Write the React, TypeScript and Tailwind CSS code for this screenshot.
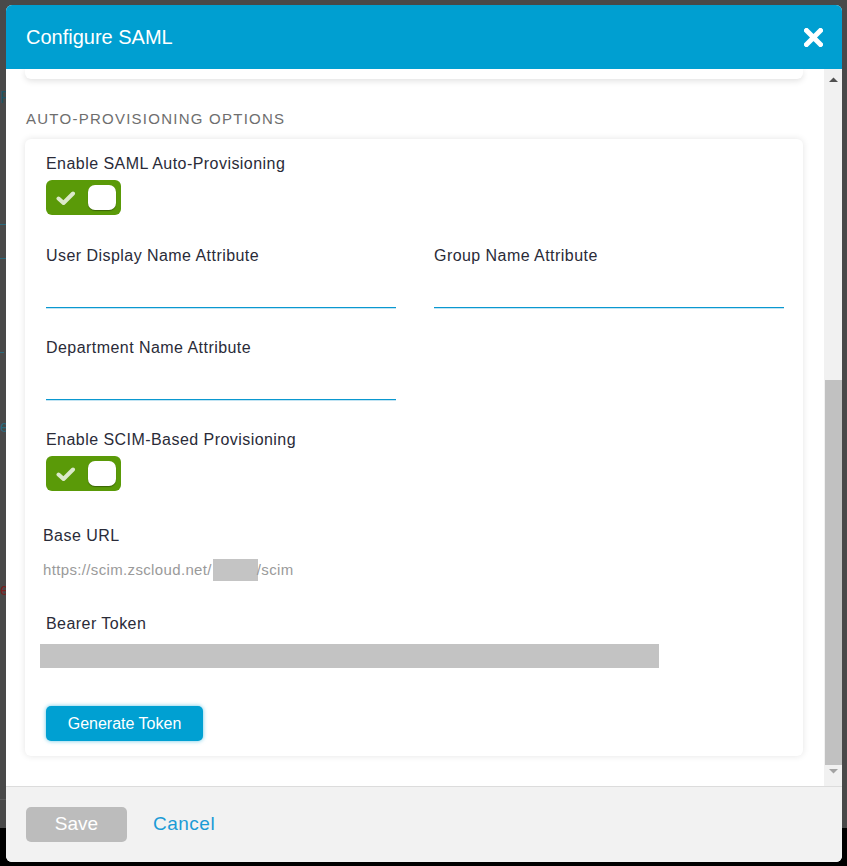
import React from "react";

const font = { fontFamily: '"Liberation Sans", Arial, sans-serif' };

function Toggle() {
  return (
    <div className="w-[75px] h-[35px] rounded-[6px] bg-[#5a9a08] flex items-center pl-[10px] pr-[5px] justify-between">
      <svg width="20" height="16" viewBox="0 0 20 16" className="mt-[1px]">
        <path d="M2.5 8.5 L7.5 13 L17 3.5" fill="none" stroke="#dbe9c9" strokeWidth="4" strokeLinecap="round" strokeLinejoin="round" />
      </svg>
      <div className="w-[28px] h-[25px] bg-white rounded-[7px] shadow-[0_1px_1px_rgba(0,0,0,0.35)]" />
    </div>
  );
}

function Label({ children, className = "" }: { children: React.ReactNode; className?: string }) {
  return (
    <div className={"text-[16px] leading-[18px] tracking-[0.45px] text-[#2a2b38] " + className}>{children}</div>
  );
}

function Field({ label }: { label: string }) {
  return (
    <div className="w-[350px]">
      <Label>{label}</Label>
      <div className="h-[42px]" />
      <div className="h-px bg-[#0a98d0]" />
      <div className="h-px bg-[#c2e4f3]" />
    </div>
  );
}

export default function App() {
  return (
    <div className="relative w-[847px] h-[866px] overflow-hidden bg-black" style={font}>
      {/* page behind the overlay */}
      <div className="absolute left-0 top-0 w-[847px] h-[828px] bg-[#494949]">
        <div className="absolute left-0 top-[86px] text-[16px] text-[#1d5566]">R</div>
        <div className="absolute left-0 top-[224px] w-[6px] h-px bg-[#2b6a7c]" />
        <div className="absolute left-0 top-[258px] w-[6px] h-px bg-[#2b6a7c]" />
        <div className="absolute left-0 top-[352px] w-[4px] h-px bg-[#2b6a7c]" />
        <div className="absolute left-0 top-[415px] text-[16px] text-[#2b6a7c]">e</div>
        <div className="absolute left-0 top-[578px] text-[16px] text-[#7a2020]">e</div>
        <div className="absolute left-0 top-[799px] w-[6px] h-px bg-[#5a5a5a]" />
      </div>

      {/* modal */}
      <div className="absolute left-[6px] top-[5px] w-[836px] h-[857px] rounded-[6px] overflow-hidden flex flex-col bg-white">
        {/* header */}
        <div className="h-[64px] shrink-0 bg-[#009fd1] flex items-center justify-between pl-[20px] pr-[19px]">
          <div className="text-white text-[20px] leading-none">Configure SAML</div>
          <svg width="19" height="19" viewBox="0 0 19 19">
            <path d="M2.5 2.5 L16.5 16.5 M16.5 2.5 L2.5 16.5" stroke="white" strokeWidth="5" strokeLinecap="square" />
          </svg>
        </div>

        {/* body */}
        <div className="h-[717px] shrink-0 flex">
          <div className="flex-1 pl-[19px] pr-[21px] overflow-hidden">
            <div className="h-[10px] bg-white rounded-b-[6px] shadow-[0_2px_6px_rgba(0,0,0,0.12)]" />
            <div className="mt-[31px] h-[18px] text-[15px] leading-[18px] tracking-[1.25px] text-[#6e6e6e] pl-px">
              AUTO-PROVISIONING OPTIONS
            </div>
            <div className="mt-[11px] bg-white rounded-[6px] shadow-[0_0_7px_rgba(0,0,0,0.11)] pl-[21px] pr-[18px] pt-[16px] pb-[15px]">
              <Label>Enable SAML Auto-Provisioning</Label>
              <div className="mt-[7px]">
                <Toggle />
              </div>
              <div className="mt-[32px] flex gap-[38px]">
                <Field label="User Display Name Attribute" />
                <Field label="Group Name Attribute" />
              </div>
              <div className="mt-[30px]">
                <Field label="Department Name Attribute" />
              </div>
              <Label className="mt-[30px]">Enable SCIM-Based Provisioning</Label>
              <div className="mt-[7px]">
                <Toggle />
              </div>
              <Label className="mt-[36px] -ml-[3px]">Base URL</Label>
              <div className="mt-[16px] -ml-[3px] h-[18px] text-[15px] leading-[18px] tracking-[0.35px] text-[#9a9a9a] flex items-center">
                <span>https://scim.zscloud.net/</span>
                <span className="inline-block w-[45px] h-[22px] bg-[#c4c4c4] ml-px" />
                <span className="-ml-[1px]">/scim</span>
              </div>
              <Label className="mt-[36px]">Bearer Token</Label>
              <div className="mt-[11px] -ml-[6px] w-[619px] h-[24px] bg-[#c3c3c3]" />
              <button className="mt-[38px] w-[157px] h-[35px] rounded-[5px] bg-[#00a0d2] text-white text-[16px] shadow-[0_0_4px_rgba(0,160,210,0.6)] block">
                Generate Token
              </button>
            </div>
          </div>
          {/* scrollbar */}
          <div className="w-[18px] bg-[#f1f1f1] flex flex-col items-center">
            <svg width="9" height="6" viewBox="0 0 9 6" className="mt-[8px]">
              <path d="M0 5 L4.5 0.5 L9 5 Z" fill="#505050" />
            </svg>
            <div className="mt-[297px] w-[17px] h-[385px] bg-[#c1c1c1]" />
            <svg width="9" height="6" viewBox="0 0 9 6" className="mt-[3px]">
              <path d="M0 1 L4.5 5.5 L9 1 Z" fill="#a3a3a3" />
            </svg>
          </div>
        </div>

        {/* footer */}
        <div className="flex-1 bg-[#f2f2f2] border-t border-[#dcdcdc] flex items-start pl-[20px] pt-[20px]">
          <button className="w-[101px] h-[35px] rounded-[5px] bg-[#bcbcbc] text-white text-[19px]">Save</button>
          <span className="ml-[26px] mt-[6px] text-[19px] leading-[22px] tracking-[0.5px] text-[#1b9bd6]">Cancel</span>
        </div>
      </div>
    </div>
  );
}
